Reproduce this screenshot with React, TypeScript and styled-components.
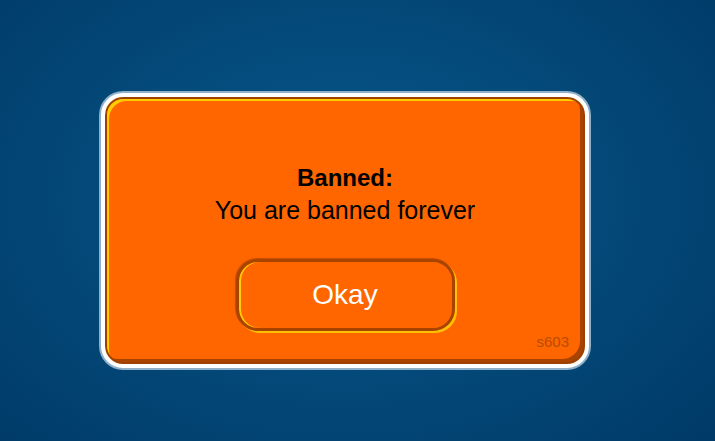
import styled, { createGlobalStyle } from "styled-components";

const GlobalStyle = createGlobalStyle`
  html, body {
    margin: 0;
    padding: 0;
  }
  body {
    font-family: "Liberation Sans", Arial, sans-serif;
  }
`;

const Page = styled.div`
  width: 715px;
  height: 441px;
  box-sizing: border-box;
  padding: 93px 0 0 101px;
  background: radial-gradient(
    ellipse 70% 80% at 48% 45%,
    #07588c 0%,
    #044b7b 45%,
    #003a68 100%
  );
  overflow: hidden;
`;

const Dialog = styled.div`
  width: 488px;
  height: 275px;
  box-sizing: border-box;
  border: 4px solid #ffffff;
  border-radius: 22px;
  background: #ff6600;
  box-shadow: 0 0 0 2px #8fb0c8, inset 0 0 0 2px #a04000,
    inset 4px 4px 0 #ffcc00, inset -5px -5px 0 #a84300;
  padding: 65px 16px 0;
  display: flex;
  flex-direction: column;
  align-items: center;
`;

const Title = styled.div`
  font-weight: bold;
  font-size: 24px;
  line-height: 32px;
  color: #000;
`;

const Message = styled.div`
  font-size: 25px;
  line-height: 32px;
  color: #000;
`;

const OkayButton = styled.button`
  margin-top: 33px;
  width: 219px;
  height: 72px;
  box-sizing: border-box;
  border: 3px solid #a84400;
  border-radius: 22px;
  background: #ff6600;
  box-shadow: -1px -1px 1px rgba(130, 45, 0, 0.45), 2px 2px 0 #ffc000,
    inset 2px 0 0 #ffcc00;
  color: #ffffff;
  font-family: "Liberation Sans", Arial, sans-serif;
  font-size: 28px;
  line-height: 1;
  padding: 0;
  cursor: pointer;
`;

const Footer = styled.div`
  align-self: stretch;
  display: flex;
  justify-content: flex-end;
  margin-top: 2px;
`;

const ServerCode = styled.span`
  font-size: 15px;
  line-height: 17px;
  color: #b84c00;
`;

export default function App() {
  return (
    <>
      <GlobalStyle />
      <Page>
        <Dialog>
          <Title>Banned:</Title>
          <Message>You are banned forever</Message>
          <OkayButton type="button">Okay</OkayButton>
          <Footer>
            <ServerCode>s603</ServerCode>
          </Footer>
        </Dialog>
      </Page>
    </>
  );
}
